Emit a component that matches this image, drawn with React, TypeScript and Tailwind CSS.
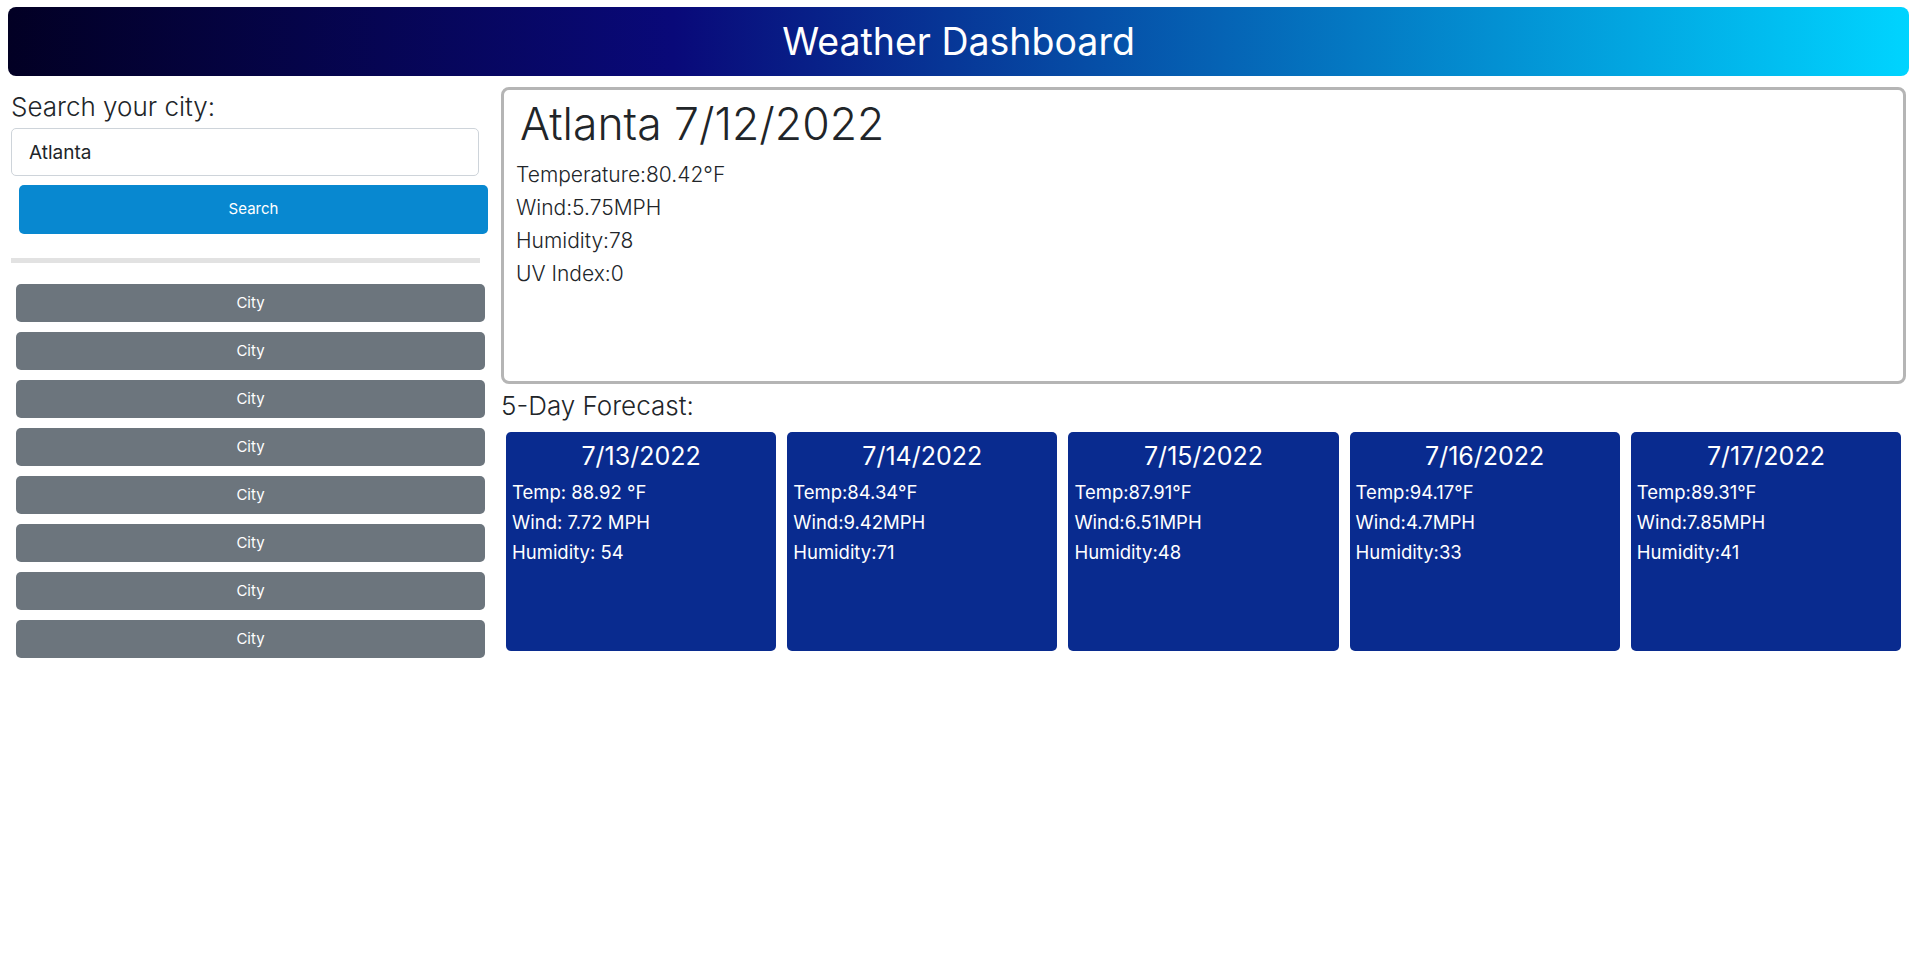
import React from 'react';

interface Forecast {
  date: string;
  temp: string;
  wind: string;
  humidity: string;
}

const forecasts: Forecast[] = [
  { date: '7/13/2022', temp: 'Temp: 88.92 °F', wind: 'Wind: 7.72 MPH', humidity: 'Humidity: 54' },
  { date: '7/14/2022', temp: 'Temp:84.34°F', wind: 'Wind:9.42MPH', humidity: 'Humidity:71' },
  { date: '7/15/2022', temp: 'Temp:87.91°F', wind: 'Wind:6.51MPH', humidity: 'Humidity:48' },
  { date: '7/16/2022', temp: 'Temp:94.17°F', wind: 'Wind:4.7MPH', humidity: 'Humidity:33' },
  { date: '7/17/2022', temp: 'Temp:89.31°F', wind: 'Wind:7.85MPH', humidity: 'Humidity:41' },
];

const history = ['City', 'City', 'City', 'City', 'City', 'City', 'City', 'City'];

const App: React.FC = () => {
  return (
    <div className="min-h-screen bg-white font-['Inter',sans-serif] text-[#212529]">
      <header className="mx-[8px] pt-[7px]">
        <div className="h-[69px] rounded-lg bg-[linear-gradient(90deg,#020024_0%,#090979_35%,#00d4ff_100%)] flex items-center justify-center">
          <h1 className="text-[37.5px] leading-none text-white">Weather Dashboard</h1>
        </div>
      </header>

      <div className="flex pt-[11px]">
        {/* sidebar */}
        <aside className="w-[490px] shrink-0 pl-[11px] pt-[5px]">
          <h4 className="text-[26px] leading-[29px] font-light">Search your city:</h4>
          <input
            type="text"
            defaultValue="Atlanta"
            className="mt-[7px] block h-[48px] w-[468px] rounded-[5px] border border-[#ced4da] px-[17px] text-[19px] text-[#212529] outline-none"
          />
          <button className="mt-[9px] ml-[8px] block h-[49px] w-[469px] rounded-[5px] bg-[#0888d0] text-[15px] text-white">
            Search
          </button>
          <div className="mt-[24px] h-[5px] w-[469px] bg-[#e2e2e2]" />
          <div className="mt-[21px] ml-[5px] flex w-[469px] flex-col gap-[10px]">
            {history.map((city, idx) => (
              <button
                key={idx}
                className="h-[38px] w-full rounded-[5px] bg-[#6c757d] text-[15px] text-white"
              >
                {city}
              </button>
            ))}
          </div>
        </aside>

        {/* main */}
        <main className="flex-1 pl-[11px] pr-[11px]">
          <section className="h-[297px] rounded-lg border-[3px] border-[#b5b5b5] pt-[8px] font-light">
            <h2 className="pl-[16px] text-[44.5px] leading-[52px]">Atlanta 7/12/2022</h2>
            <div className="mt-[8px] pl-[12px] text-[21px] leading-[33px]">
              <p>Temperature:80.42°F</p>
              <p>Wind:5.75MPH</p>
              <p>Humidity:78</p>
              <p>UV Index:0</p>
            </div>
          </section>

          <h4 className="mt-[7px] text-[26px] leading-[29px] font-light">5-Day Forecast:</h4>

          <div className="mt-[12px] grid grid-cols-5 gap-[11px] px-[5px]">
            {forecasts.map((f) => (
              <div key={f.date} className="h-[219px] rounded-[5px] bg-[#092b8f] px-[6px] pt-[10px] text-white">
                <h4 className="text-center text-[25px] leading-[29px]">{f.date}</h4>
                <div className="mt-[6px] text-[18.5px] leading-[30px]">
                  <p>{f.temp}</p>
                  <p>{f.wind}</p>
                  <p>{f.humidity}</p>
                </div>
              </div>
            ))}
          </div>
        </main>
      </div>
    </div>
  );
};

export default App;
